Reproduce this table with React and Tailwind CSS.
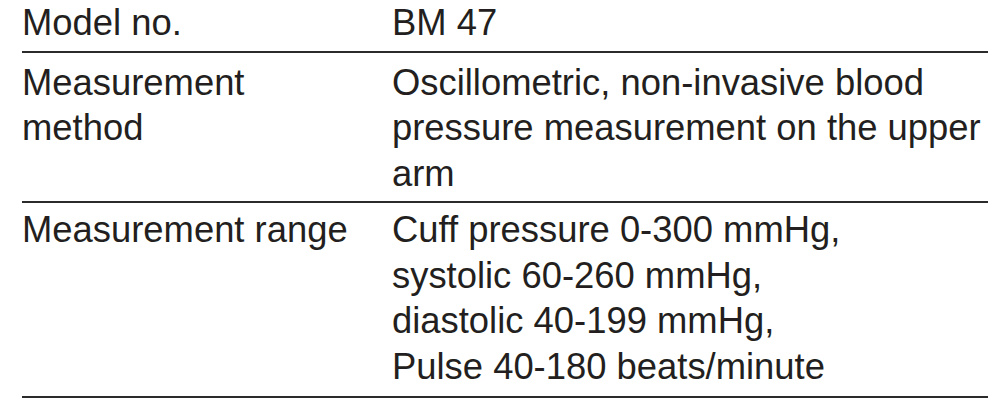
import React from 'react';

const rows = [
  { label: ['Model no.'], value: ['BM 47'], pad: 'pt-[0px] pb-[5px]' },
  {
    label: ['Measurement', 'method'],
    value: ['Oscillometric, non-invasive blood', 'pressure measurement on the upper', 'arm'],
    pad: 'pt-[7px] pb-[4px]',
  },
  {
    label: ['Measurement range'],
    value: ['Cuff pressure 0-300 mmHg,', 'systolic 60-260 mmHg,', 'diastolic 40-199 mmHg,', 'Pulse 40-180 beats/minute'],
    pad: 'pt-[4px] pb-[6px]',
  },
];

const App = () => {
  return (
    <div className="w-[994px] h-[406px] bg-white overflow-hidden">
      <div
        className="ml-[22px] w-[966px] text-[#231f20] text-[36.4px] leading-[45.7px]"
        style={{ fontFamily: '"Liberation Sans", Arial, sans-serif' }}
      >
        {rows.map((row, i) => (
          <div
            key={i}
            className={`grid grid-cols-[370px_1fr] border-b-[2.5px] border-[#2b2b2b] ${row.pad}`}
          >
            <div className="whitespace-nowrap">
              {row.label.map((l, j) => (
                <div key={j}>{l}</div>
              ))}
            </div>
            <div className="whitespace-nowrap">
              {row.value.map((v, j) => (
                <div key={j}>{v}</div>
              ))}
            </div>
          </div>
        ))}
      </div>
    </div>
  );
};

export default App;
